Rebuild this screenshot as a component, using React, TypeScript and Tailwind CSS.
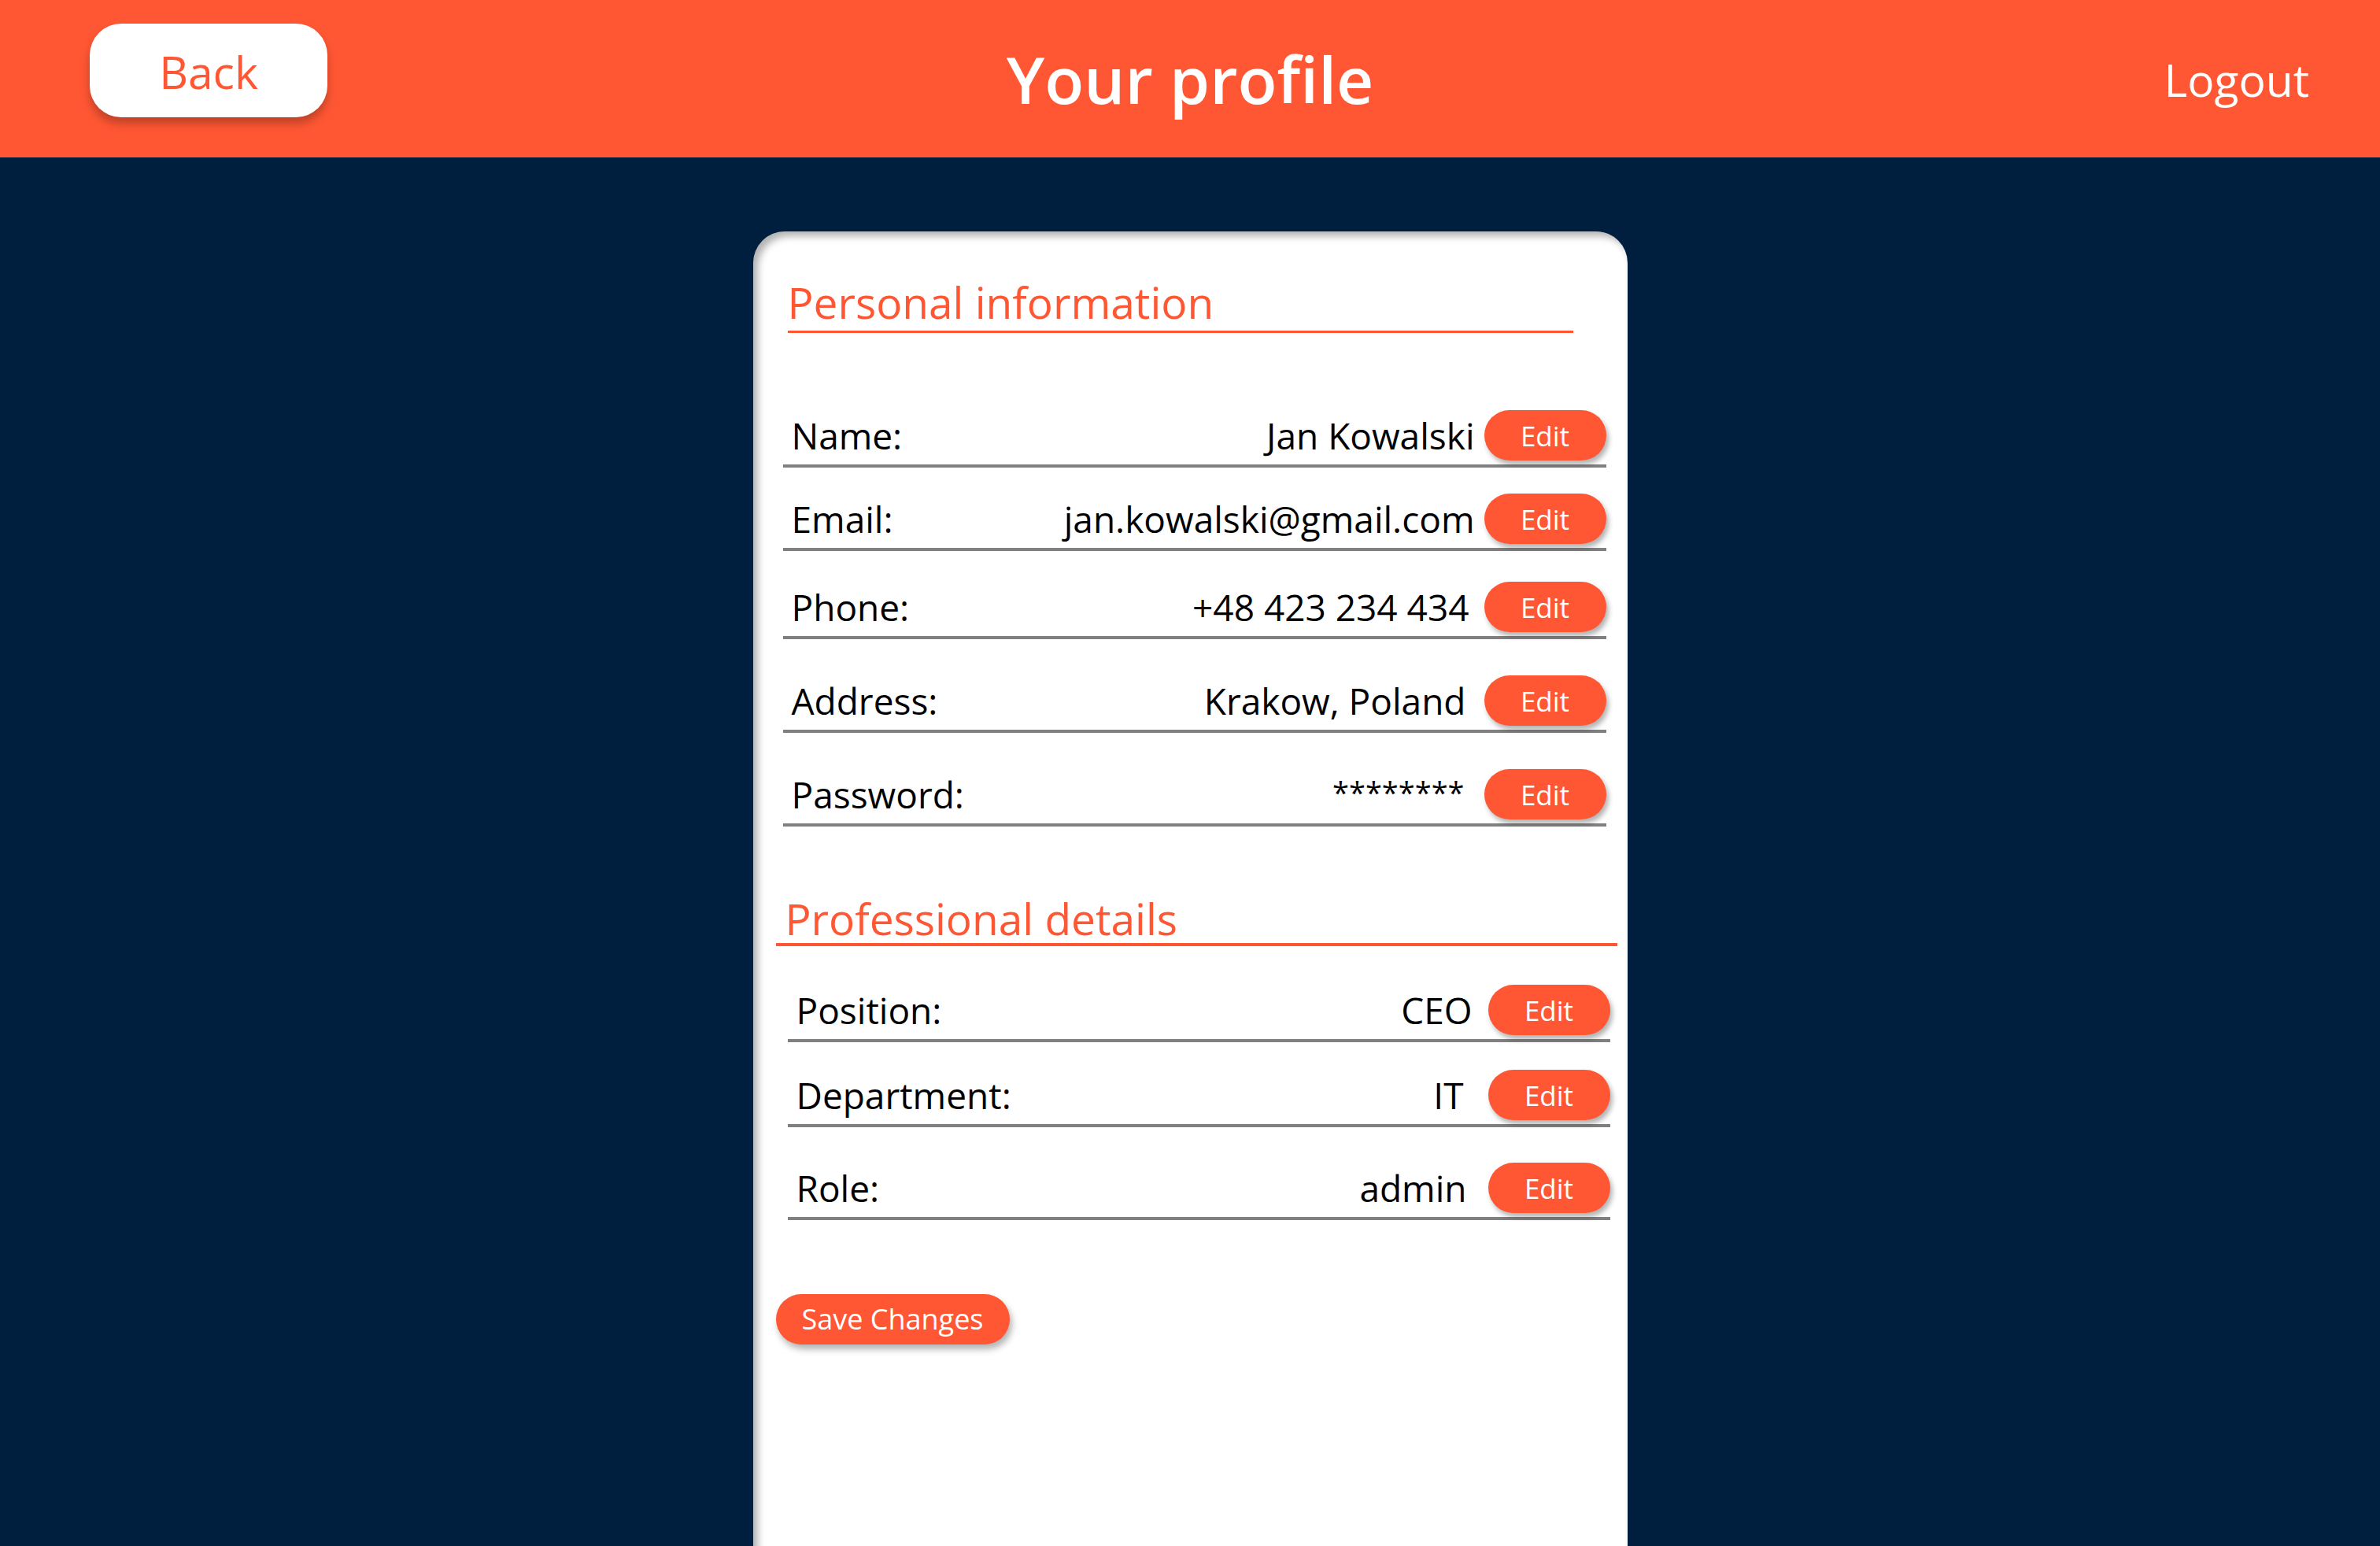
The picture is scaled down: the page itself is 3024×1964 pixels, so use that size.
import React from 'react'

type Row = {
  label: string
  value: string
  gap: string // space above the row
  valueGap: string // space between value and Edit button
  valueSize?: string
}

const personal: Row[] = [
  { label: 'Name:', value: 'Jan Kowalski', gap: 'mt-[98px]', valueGap: 'mr-[12px]' },
  { label: 'Email:', value: 'jan.kowalski@gmail.com', gap: 'mt-[33px]', valueGap: 'mr-[12px]' },
  { label: 'Phone:', value: '+48 423 234 434', gap: 'mt-[39px]', valueGap: 'mr-[19px]' },
  { label: 'Address:', value: 'Krakow, Poland', gap: 'mt-[46px]', valueGap: 'mr-[23px]' },
  { label: 'Password:', value: '********', gap: 'mt-[46px]', valueGap: 'mr-[25px]', valueSize: 'text-[38px] -mt-[6px]' },
]

const professional: Row[] = [
  { label: 'Position:', value: 'CEO', gap: 'mt-[49px]', valueGap: 'mr-[20px]' },
  { label: 'Department:', value: 'IT', gap: 'mt-[35px]', valueGap: 'mr-[31px]' },
  { label: 'Role:', value: 'admin', gap: 'mt-[45px]', valueGap: 'mr-[27px]' },
]

function InfoRow({ row }: { row: Row }) {
  return (
    <div className={`${row.gap} flex items-center pb-[5px] border-b-4 border-[#808080]`}>
      <span className="pl-[11px] text-[46px] leading-none text-black">{row.label}</span>
      <span className={`ml-auto ${row.valueGap} ${row.valueSize ?? 'text-[46px]'} leading-none text-black`}>
        {row.value}
      </span>
      <button className="h-[64px] w-[155px] shrink-0 rounded-full bg-[#ff5733] text-[35px] leading-none text-white shadow-[3px_5px_6px_rgba(0,0,0,0.3)]">
        Edit
      </button>
    </div>
  )
}

export default function App() {
  return (
    <div className="h-screen overflow-hidden bg-[#001f3f] font-['Open_Sans',sans-serif]">
      {/* Header */}
      <header className="grid h-[200px] grid-cols-3 items-start bg-[#ff5733]">
        <div className="pl-[114px] pt-[30px]">
          <button className="flex h-[119px] w-[302px] items-center justify-center rounded-[40px] bg-white pt-[4px] text-[57px] leading-none text-[#ff5733] shadow-[0_8px_12px_rgba(0,0,0,0.25)]">
            Back
          </button>
        </div>
        <h1 className="mt-[59px] text-center text-[82px] font-semibold leading-none text-white">Your profile</h1>
        <div className="flex justify-end pr-[90px] pt-[73px]">
          <span className="text-[57px] leading-none text-white">Logout</span>
        </div>
      </header>

      {/* Card */}
      <main className="mx-auto mt-[94px] h-[1700px] w-[1111px] rounded-t-[40px] bg-white shadow-[inset_6px_6px_10px_rgba(0,0,0,0.3)]">
        <div className="pt-[62px]">
          <h2 className="ml-[44px] w-[998px] border-b-[3px] border-[#ff5733] pb-[9px] text-[55px] leading-none text-[#ff5733]">
            Personal information
          </h2>
          <div className="ml-[38px] w-[1046px]">
            {personal.map((row) => (
              <InfoRow key={row.label} row={row} />
            ))}
          </div>

          <h2 className="ml-[29px] mt-[89px] w-[1069px] border-b-4 border-[#ff5733] pb-[4px] pl-[12px] text-[55px] leading-none text-[#ff5733]">
            Professional details
          </h2>
          <div className="ml-[44px] w-[1045px]">
            {professional.map((row) => (
              <InfoRow key={row.label} row={row} />
            ))}
          </div>

          <button className="ml-[29px] mt-[94px] h-[64px] w-[297px] rounded-full bg-[#ff5733] text-[36px] leading-none text-white shadow-[3px_6px_8px_rgba(0,0,0,0.3)]">
            Save Changes
          </button>
        </div>
      </main>
    </div>
  )
}
